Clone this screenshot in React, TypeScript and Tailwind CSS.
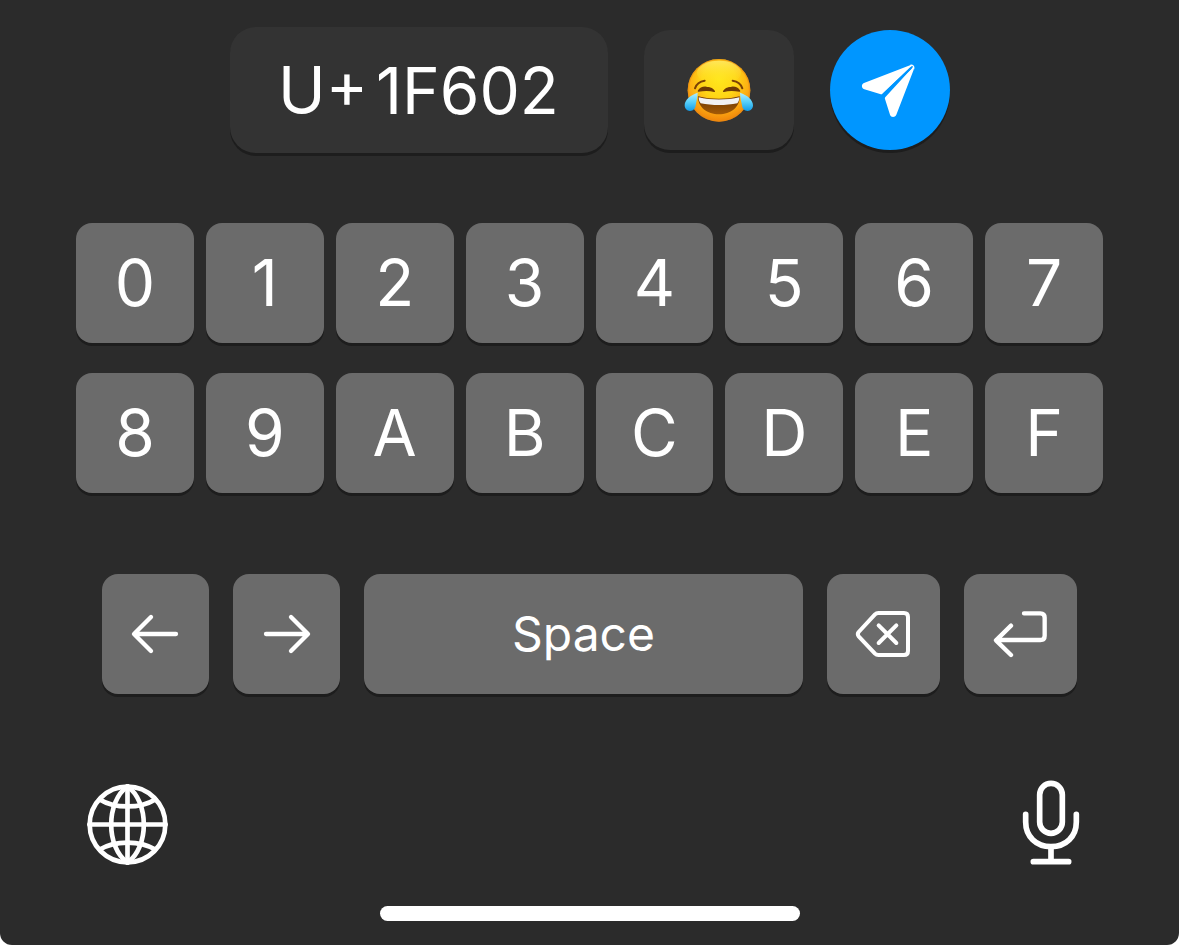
import { useState } from "react";
import type { ReactNode } from "react";

const ROWS = [
  ["0", "1", "2", "3", "4", "5", "6", "7"],
  ["8", "9", "A", "B", "C", "D", "E", "F"],
];

const KEY =
  "flex h-[120px] min-w-0 items-center justify-center rounded-[16px] bg-[#6b6b6b] text-white shadow-[0_3px_0_#1d1d1d] active:bg-[#808080]";

function Key({
  label,
  className,
  onClick,
  children,
}: {
  label: string;
  className: string;
  onClick?: () => void;
  children: ReactNode;
}) {
  return (
    <button type="button" aria-label={label} onClick={onClick} className={`${KEY} ${className}`}>
      {children}
    </button>
  );
}

function JoyFace() {
  return (
    <svg viewBox="129 102 216 216" className="size-[72px]" aria-hidden="true">
      <defs>
        <radialGradient id="face" gradientUnits="userSpaceOnUse" cx="237" cy="180" r="126">
          <stop offset="0" stopColor="#ffe61c" />
          <stop offset="0.4" stopColor="#ffd716" />
          <stop offset="0.7" stopColor="#fdb013" />
          <stop offset="1" stopColor="#f0820a" />
        </radialGradient>
        <linearGradient id="shine" x1="0" y1="0" x2="0" y2="1">
          <stop offset="0" stopColor="#fff9a0" stopOpacity="0.5" />
          <stop offset="1" stopColor="#ffe81c" stopOpacity="0" />
        </linearGradient>
        <linearGradient id="mouth" x1="0" y1="0" x2="0" y2="1">
          <stop offset="0" stopColor="#6a3605" />
          <stop offset="1" stopColor="#a35a06" />
        </linearGradient>
        <linearGradient id="tear" x1="0" y1="0" x2="0" y2="1">
          <stop offset="0" stopColor="#b5effc" />
          <stop offset="0.5" stopColor="#58d0fa" />
          <stop offset="1" stopColor="#139be6" />
        </linearGradient>
      </defs>
      <circle cx="237" cy="211" r="94" fill="url(#face)" />
      <circle cx="237" cy="211" r="92" fill="none" stroke="#e98a12" strokeOpacity="0.6" strokeWidth="4" />
      <ellipse cx="237" cy="158" rx="66" ry="36" fill="url(#shine)" />
      <g fill="none" stroke="#7b4106" strokeLinecap="round">
        <path d="M165 205 C169 192 179 184 194 182" strokeWidth="6" />
        <path d="M307 205 C303 192 293 184 278 182" strokeWidth="6" />
      </g>
      <path d="M175 213 C182 202 192 201 200 202 C212 203 220 208 223 214 C209 210 194 210 175 213Z" fill="#6f3a05" stroke="#6f3a05" strokeWidth="4" strokeLinejoin="round" />
      <path d="M299 213 C292 202 282 201 274 202 C262 203 254 208 251 214 C265 210 280 210 299 213Z" fill="#6f3a05" stroke="#6f3a05" strokeWidth="4" strokeLinejoin="round" />
      <path d="M174 229 C212 239 262 239 299 229 C300 262 272 283 237 283 C202 283 173 262 174 229Z" fill="url(#mouth)" />
      <path d="M176 232 C212 241 262 241 298 232 C298 239 296 246 292 250 C258 257 216 257 182 250 C178 246 176 239 176 232Z" fill="#f1f1f4" />
      <path d="M173 218 C152 225 134 239 134 256 C134 266 141 273 150 273 C160 273 166 266 167 256 C169 243 173 231 173 218Z" fill="url(#tear)" />
      <path d="M300 218 C321 225 339 239 339 256 C339 266 332 273 323 273 C313 273 307 266 306 256 C304 243 300 231 300 218Z" fill="url(#tear)" />
    </svg>
  );
}

function SendIcon() {
  return (
    <svg viewBox="30 30 360 360" className="size-full" aria-hidden="true">
      <path
        d="M132 189 L270 136 C273 135 276 134.500 278 136 L188 221 C186 223 183 223 180 222 L133 208 C123 204 124 192 132 189Z"
        fill="#fff"
      />
      <path
        d="M281 139 C283 142 282 146 281 149 L229 284 C225 293 213 293 210 284 L195 237 C194 234 195 232 197 230Z"
        fill="#fff"
      />
      <path d="M271 136 C278 134 283 139 281 147" fill="none" stroke="#fff" strokeWidth="4" />
      <path d="M190 223 L272 145" stroke="#0096ff" strokeWidth="6" strokeLinecap="round" />
    </svg>
  );
}

function StrokeIcon({ viewBox, className, width, children }: { viewBox: string; className: string; width: number; children: ReactNode }) {
  return (
    <svg
      viewBox={viewBox}
      className={className}
      fill="none"
      stroke="#fff"
      strokeWidth={width}
      strokeLinecap="round"
      strokeLinejoin="round"
      aria-hidden="true"
    >
      {children}
    </svg>
  );
}

export default function App() {
  const [code, setCode] = useState("1F602");
  const append = (digit: string) => setCode((value) => value + digit);

  return (
    <div className="min-h-screen bg-white">
      <main className="flex min-h-screen flex-col rounded-b-[12px] bg-[#2b2b2b] pt-[27px] pb-6 font-['Inter','Liberation_Sans',sans-serif] text-white">
        <div className="flex items-center justify-center gap-9 pl-px">
          <label className="flex h-[126px] w-[378px] items-center gap-2 rounded-[26px] bg-[#333] pl-12 text-[64px] leading-none shadow-[0_3px_0_#1d1d1d]">
            <span>U+</span>
            <input
              aria-label="Code point"
              value={code}
              onChange={(event) => setCode(event.target.value)}
              className="h-20 min-w-0 flex-1 bg-transparent outline-none"
            />
          </label>
          <button
            type="button"
            aria-label="Face with tears of joy"
            className="flex h-[120px] w-[150px] items-center justify-center rounded-[26px] bg-[#333] shadow-[0_3px_0_#1d1d1d]"
          >
            <JoyFace />
          </button>
          <button
            type="button"
            aria-label="Send"
            className="size-[120px] rounded-full bg-[#0096ff] shadow-[0_3px_0_#1d1d1d]"
          >
            <SendIcon />
          </button>
        </div>

        <div className="mt-[70px] flex flex-col gap-[30px] px-[76px]">
          {ROWS.map((row) => (
            <div key={row[0]} className="grid grid-cols-8 gap-3">
              {row.map((digit) => (
                <Key key={digit} label={digit} onClick={() => append(digit)} className="text-[64px] leading-none">
                  {digit}
                </Key>
              ))}
            </div>
          ))}
        </div>

        <div className="mt-[81px] flex gap-6 px-[102px]">
          <Key label="Move left" className="w-[107px]">
            <StrokeIcon viewBox="21 27 321 360" className="size-full" width={13}>
              <path d="M243 207 H118 M168 156 L117 207 L168 258" />
            </StrokeIcon>
          </Key>
          <Key label="Move right" className="w-[107px]">
            <StrokeIcon viewBox="414 27 321 360" className="size-full" width={13}>
              <path d="M513 207 H638 M588 156 L639 207 L588 258" />
            </StrokeIcon>
          </Key>
          <Key label="Space" onClick={() => append(" ")} className="flex-1 text-5xl leading-none">
            Space
          </Key>
          <Key label="Delete" onClick={() => setCode((value) => value.slice(0, -1))} className="w-[113px]">
            <StrokeIcon viewBox="21 27 339 360" className="size-full" width={12}>
              <path d="M175 144 H252 Q264 144 264 156 V258 Q264 270 252 270 H175 Q169 270 165 266 L116 214 Q111 207 116 201 L165 148 Q169 144 175 144Z" />
              <path d="M176 181 L229 234 M229 181 L176 234" />
            </StrokeIcon>
          </Key>
          <Key label="Return" className="w-[113px]">
            <StrokeIcon viewBox="432 27 339 360" className="size-full" width={13}>
              <path d="M612 145 H661 Q674 145 674 158 V212 Q674 225 661 225 H530 M573 182 L528 226 L573 270" />
            </StrokeIcon>
          </Key>
        </div>

        <div className="mt-[86px] flex items-end justify-between pr-[99px] pl-[87px]">
          <button type="button" aria-label="Next keyboard">
            <StrokeIcon viewBox="22 29 242 242" className="size-[81px]" width={14}>
              <circle cx="143" cy="150" r="113" />
              <path d="M143 36 V264 M29 150 H257" />
              <path d="M143 36 C78 82 78 218 143 264 M143 36 C208 82 208 218 143 264" />
              <path d="M60 75 C105 103 181 103 226 75 M60 225 C105 197 181 197 226 225" />
            </StrokeIcon>
          </button>
          <button type="button" aria-label="Dictate">
            <StrokeIcon viewBox="36 27 174 255" className="h-[85px] w-[58px]" width={17}>
              <rect x="89" y="37" width="68" height="150" rx="34" />
              <path d="M47 130 V153 C47 196 78 227 123 227 C168 227 199 196 199 153 V130" />
              <path d="M123 228 V272 M70 272 H176" />
            </StrokeIcon>
          </button>
        </div>

        <div className="mt-[41px] ml-px h-[15px] w-[420px] self-center rounded-full bg-white" />
      </main>
    </div>
  );
}
